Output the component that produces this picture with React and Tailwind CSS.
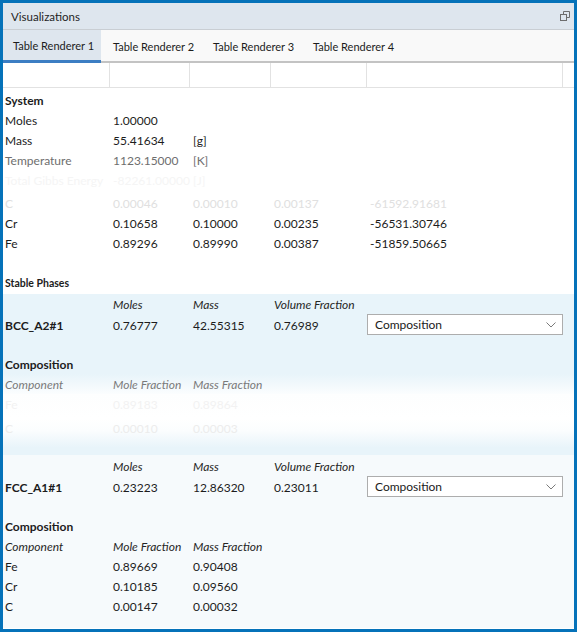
const TABS = ['Table Renderer 1', 'Table Renderer 2', 'Table Renderer 3', 'Table Renderer 4'];

const GRID = 'grid grid-cols-[107px_80px_81px_96px_1fr]';

function Row({ cells, className = '', first = '' }) {
  return (
    <div className={`${GRID} h-[20px] items-center pt-[2px] ${className}`}>
      {cells.map((c, i) => (
        <div key={i} className={`whitespace-nowrap ${i === 0 ? `pl-[2px] ${first}` : 'pl-[3px]'}`}>
          {c}
        </div>
      ))}
    </div>
  );
}

function Dropdown() {
  return (
    <div className="flex h-[21px] w-[196px] items-center justify-between border border-[#adadad] bg-white pl-[7px] pr-[5px] text-[#1a1a1a]">
      <span>Composition</span>
      <svg width="10" height="6" viewBox="0 0 10 6" className="mr-[1px]">
        <polyline points="0.5,0.5 5,5 9.5,0.5" fill="none" stroke="#7a7a7a" strokeWidth="1" />
      </svg>
    </div>
  );
}

function PhaseHead({ name, moles, mass, vf }) {
  return (
    <>
      <Row className="italic text-[#262626]" cells={['', 'Moles', 'Mass', 'Volume Fraction', '']} />
      <div className={`${GRID} h-[20px] items-center`}>
        <div className="pl-[2px] pt-[2px] font-bold">{name}</div>
        <div className="pl-[3px] pt-[2px]">{moles}</div>
        <div className="pl-[3px] pt-[2px]">{mass}</div>
        <div className="pl-[3px] pt-[2px]">{vf}</div>
        <div className="pl-0">
          <Dropdown />
        </div>
      </div>
      <div className="h-[20px]" />
      <div className="flex h-[20px] items-center pl-[2px] pt-[2px] font-bold">Composition</div>
    </>
  );
}

export default function App() {
  return (
    <div
      className="h-[632px] w-[577px] overflow-hidden border-[3px] border-[#0572b9] bg-white text-[12px] text-[#1c1c1c]"
      style={{ fontFamily: 'Lato, "Noto Sans", sans-serif' }}
    >
      <div className="flex h-[27px] items-center justify-between border-b border-[#c9ced3] bg-[#dee6ee] pl-[8px] pr-[4px] pt-[2px]">
        <span className="text-[11.5px] text-[#1e1e1e]">Visualizations</span>
        <svg width="10" height="10" viewBox="0 0 10 10" className="-mt-[2px]">
          <rect x="0.5" y="3.5" width="6" height="6" fill="none" stroke="#6d6d6d" />
          <polyline points="3.5,3 3.5,0.5 9.5,0.5 9.5,6.5 7,6.5" fill="none" stroke="#6d6d6d" />
        </svg>
      </div>

      <div className="flex h-[33px] border-b-[2px] border-[#c3c3c3] bg-[#f9f9f9] text-[11px]">
        {TABS.map((t, i) => (
          <div
            key={t}
            className={`-mb-[2px] flex h-[33px] items-center whitespace-nowrap pt-[2px] ${
              i === 0 ? 'w-[98px] border-b-[3px] border-[#3c7ec3] bg-[#dee6ee] pl-[10px]' : 'w-[100px] pl-[12px]'
            }`}
          >
            {t}
          </div>
        ))}
      </div>

      <div className="grid h-[25px] grid-cols-[107px_80px_81px_96px_196px_1fr] border-b border-[#e2e2e2]">
        {[0, 1, 2, 3, 4, 5].map((i) => (
          <div key={i} className={i < 5 ? 'border-r border-[#e2e2e2]' : ''} />
        ))}
      </div>

      <div className="pb-[1px] pt-[2px]">
        <Row cells={['System', '', '', '', '']} first="font-bold" />
        <Row cells={['Moles', '1.00000', '', '', '']} />
        <Row cells={['Mass', '55.41634', '[g]', '', '']} />
        <Row className="text-[#6e6e6e]" cells={['Temperature', '1123.15000', '[K]', '', '']} />
        <Row className="text-[#f5f5f5]" cells={['Total Gibbs Energy', '-82261.00000', '[J]', '', '']} />
        <Row className="mt-[3px] text-[#e0e0e0]" cells={['C', '0.00046', '0.00010', '0.00137', '-61592.91681']} />
        <Row cells={['Cr', '0.10658', '0.10000', '0.00235', '-56531.30746']} />
        <Row cells={['Fe', '0.89296', '0.89990', '0.00387', '-51859.50665']} />
        <div className="h-[20px]" />
        <div className="flex h-[20px] items-center pl-[2px] pt-[2px] text-[10.5px] font-bold">Stable Phases</div>
      </div>

      <div className="bg-[#e8f4fa]">
        <PhaseHead name="BCC_A2#1" moles="0.76777" mass="42.55315" vf="0.76989" />
        <div className="bg-[linear-gradient(to_bottom,#e8f4fa_0%,#fbfdfe_100%)]">
          <Row className="italic text-[#7a7a7a]" cells={['Component', 'Mole Fraction', 'Mass Fraction', '', '']} />
        </div>
        <div className="h-[61px] bg-[linear-gradient(to_bottom,#fdfefe_0%,#ffffff_40%,#fbfdfe_60%,#e8f4fa_88%,#e8f4fa_100%)]">
          <Row className="text-[#f2f2f2]" cells={['Fe', '0.89183', '0.89864', '', '']} />
          <Row className="mt-[4px] text-[#ececec]" cells={['C', '0.00010', '0.00003', '', '']} />
        </div>
      </div>

      <div className="h-[173px] bg-[#f6fafc] pt-[1px]">
        <PhaseHead name="FCC_A1#1" moles="0.23223" mass="12.86320" vf="0.23011" />
        <Row className="italic text-[#262626]" cells={['Component', 'Mole Fraction', 'Mass Fraction', '', '']} />
        <Row cells={['Fe', '0.89669', '0.90408', '', '']} />
        <Row cells={['Cr', '0.10185', '0.09560', '', '']} />
        <Row cells={['C', '0.00147', '0.00032', '', '']} />
      </div>
    </div>
  );
}
